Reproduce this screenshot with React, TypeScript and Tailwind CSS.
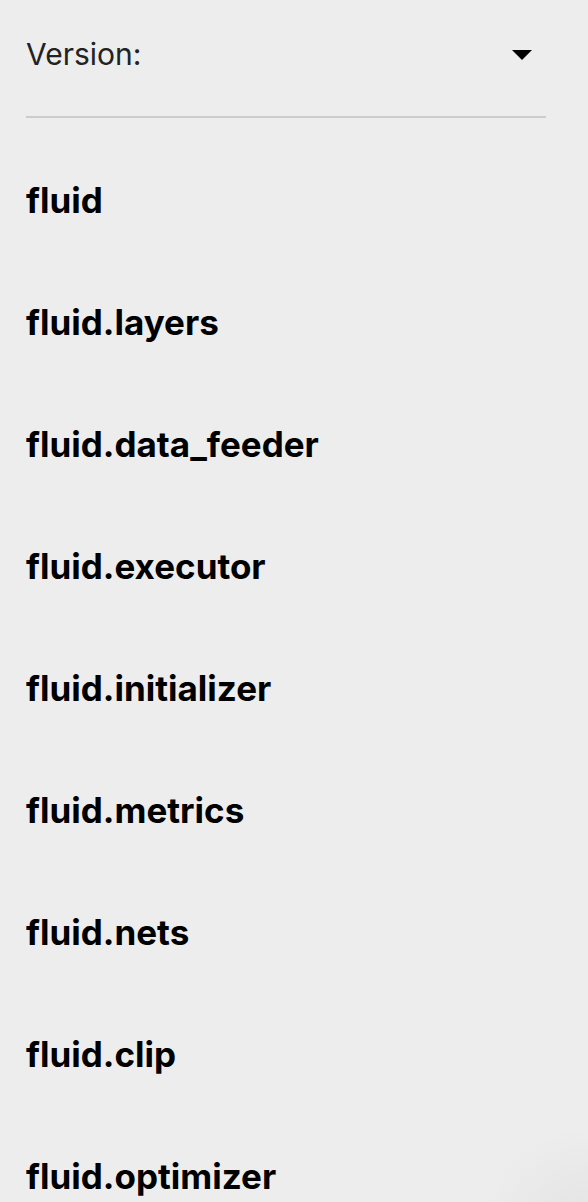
const modules = [
  "fluid",
  "fluid.layers",
  "fluid.data_feeder",
  "fluid.executor",
  "fluid.initializer",
  "fluid.metrics",
  "fluid.nets",
  "fluid.clip",
  "fluid.optimizer",
]

export default function App() {
  return (
    <div className="min-h-[1202px] w-full bg-[#ededed] bg-[radial-gradient(circle_at_100%_100%,#e2e2e2_0px,#ededed_110px)] font-['Inter',sans-serif]">
      <div className="pl-[26px] pr-[42px]">
        <div className="flex h-[118px] items-center justify-between pb-[7px] border-b-2 border-[#cccccc]">
          <span className="text-[30px] leading-[31px] text-[#222222]">Version:</span>
          <svg width="20" height="10" viewBox="0 0 20 10" className="mr-[14px]">
            <path d="M0 0 H20 L10 10 Z" fill="#000000" />
          </svg>
        </div>
        <ul className="pt-[21px]">
          {modules.map((name) => (
            <li key={name} className="text-[35px] font-bold leading-[122px] text-black">
              {name}
            </li>
          ))}
        </ul>
      </div>
    </div>
  )
}
